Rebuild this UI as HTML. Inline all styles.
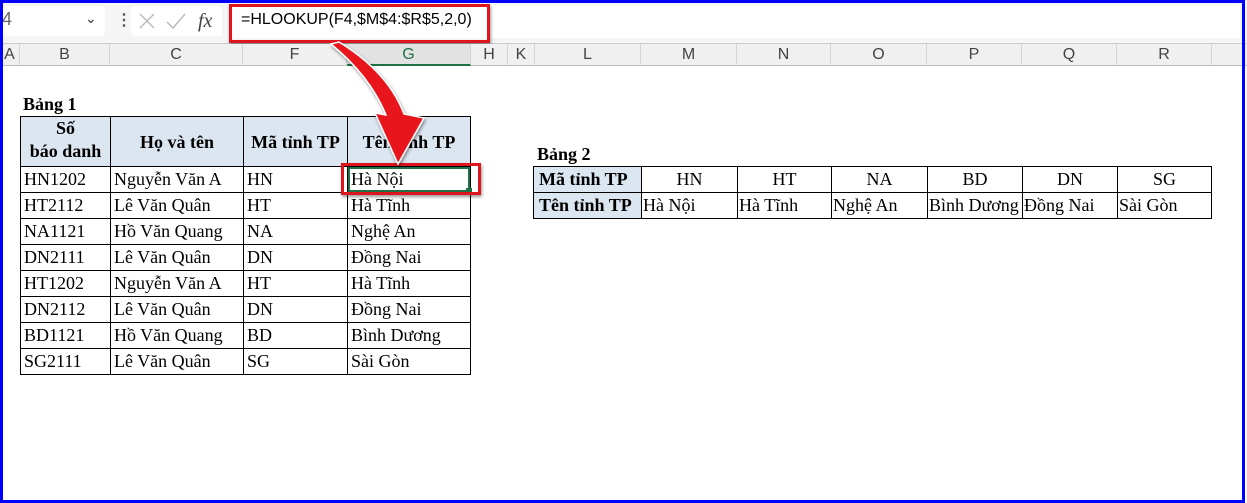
<!DOCTYPE html>
<html><head><meta charset="utf-8"><style>
*{margin:0;padding:0;box-sizing:border-box}
body{width:1247px;height:503px;background:#fff;position:relative;overflow:hidden;font-family:"Liberation Serif",serif}
.a{position:absolute}
.c{position:absolute;border:1px solid #000;font-size:18px;line-height:24px;padding-left:3px;white-space:nowrap;overflow:visible;color:#000}
.h{background:#dce6f1;font-weight:bold;text-align:center;padding:0}
.ctr{text-align:center;padding:0}
.col{position:absolute;top:44px;height:22px;font:16px "Liberation Sans",sans-serif;color:#444;text-align:center;line-height:22px;border-right:1px solid #d4d4d4}
</style></head><body>
<!-- formula bar -->
<div class="a" style="left:0;top:0;width:1247px;height:44px;background:#f5f5f5;border-bottom:1px solid #ccc"></div>
<div class="a" style="left:3px;top:6px;width:102px;height:30px;background:#fff;border-radius:4px"></div>
<div class="a" style="left:2px;top:9px;font:18px 'Liberation Sans',sans-serif;color:#666">4</div>
<div class="a" style="left:85px;top:10px;font:14px 'Liberation Sans',sans-serif;color:#333">&#8964;</div>
<div class="a" style="left:116px;top:10px;font:bold 16px 'Liberation Sans',sans-serif;color:#555">&#8942;</div>
<div class="a" style="left:131px;top:6px;width:91px;height:30px;background:#fff;border-radius:4px"></div>
<svg class="a" style="left:136px;top:10px" width="90" height="22"><path d="M4 4l14 14M18 4L4 18" stroke="#bbb" stroke-width="1.5" fill="none"/><path d="M31 12l6 6 12-14" stroke="#bbb" stroke-width="1.5" fill="none"/><text x="62" y="17" font-family="Liberation Serif" font-style="italic" font-size="20" fill="#444">fx</text></svg>
<div class="a" style="left:230px;top:5px;width:1010px;height:33px;background:#fff"></div>
<div class="a" style="left:229px;top:4px;width:261px;height:39px;border:3px solid #e0141c;box-shadow:1px 2px 3px rgba(0,0,0,.4)"></div>
<div class="a" style="left:241px;top:11px;font:16px 'Liberation Sans',sans-serif;color:#000">=HLOOKUP(F4,$M$4:$R$5,2,0)</div>
<!-- column headers -->
<div class="a" style="left:0;top:44px;width:1247px;height:22px;background:#f0f0f0;border-bottom:1px solid #bbb"></div>
<div class="col" style="left:0;width:20px">A</div>
<div class="col" style="left:20px;width:90px">B</div>
<div class="col" style="left:110px;width:133px">C</div>
<div class="col" style="left:243px;width:104px">F</div>
<div class="col" style="left:347px;width:124px;color:#1e7145;background:#e2e2e2;border-bottom:2px solid #1e7145">G</div>
<div class="col" style="left:471px;width:37px">H</div>
<div class="col" style="left:508px;width:27px">K</div>
<div class="col" style="left:535px;width:106px">L</div>
<div class="col" style="left:641px;width:96px">M</div>
<div class="col" style="left:737px;width:94px">N</div>
<div class="col" style="left:831px;width:96px">O</div>
<div class="col" style="left:927px;width:95px">P</div>
<div class="col" style="left:1022px;width:95px">Q</div>
<div class="col" style="left:1117px;width:95px">R</div>
<!-- table 1 -->
<div class="a" style="left:23px;top:94px;font:bold 18px 'Liberation Serif',serif">Bảng 1</div>
<div class="c h" style="left:20px;top:116px;width:91px;height:51px;line-height:23px">Số<br>báo danh</div>
<div class="c h" style="left:110px;top:116px;width:134px;height:51px;line-height:50px">Họ và tên</div>
<div class="c h" style="left:243px;top:116px;width:105px;height:51px;line-height:50px">Mã tỉnh TP</div>
<div class="c h" style="left:347px;top:116px;width:124px;height:51px;line-height:50px">Tên tỉnh TP</div>
<div class="c" style="left:20px;top:166px;width:91px;height:27px">HN1202</div><div class="c" style="left:110px;top:166px;width:134px;height:27px">Nguyễn Văn A</div><div class="c" style="left:243px;top:166px;width:105px;height:27px">HN</div><div class="c" style="left:347px;top:166px;width:124px;height:27px">Hà Nội</div>
<div class="c" style="left:20px;top:192px;width:91px;height:27px">HT2112</div><div class="c" style="left:110px;top:192px;width:134px;height:27px">Lê Văn Quân</div><div class="c" style="left:243px;top:192px;width:105px;height:27px">HT</div><div class="c" style="left:347px;top:192px;width:124px;height:27px">Hà Tĩnh</div>
<div class="c" style="left:20px;top:218px;width:91px;height:27px">NA1121</div><div class="c" style="left:110px;top:218px;width:134px;height:27px">Hồ Văn Quang</div><div class="c" style="left:243px;top:218px;width:105px;height:27px">NA</div><div class="c" style="left:347px;top:218px;width:124px;height:27px">Nghệ An</div>
<div class="c" style="left:20px;top:244px;width:91px;height:27px">DN2111</div><div class="c" style="left:110px;top:244px;width:134px;height:27px">Lê Văn Quân</div><div class="c" style="left:243px;top:244px;width:105px;height:27px">DN</div><div class="c" style="left:347px;top:244px;width:124px;height:27px">Đồng Nai</div>
<div class="c" style="left:20px;top:270px;width:91px;height:27px">HT1202</div><div class="c" style="left:110px;top:270px;width:134px;height:27px">Nguyễn Văn A</div><div class="c" style="left:243px;top:270px;width:105px;height:27px">HT</div><div class="c" style="left:347px;top:270px;width:124px;height:27px">Hà Tĩnh</div>
<div class="c" style="left:20px;top:296px;width:91px;height:27px">DN2112</div><div class="c" style="left:110px;top:296px;width:134px;height:27px">Lê Văn Quân</div><div class="c" style="left:243px;top:296px;width:105px;height:27px">DN</div><div class="c" style="left:347px;top:296px;width:124px;height:27px">Đồng Nai</div>
<div class="c" style="left:20px;top:322px;width:91px;height:27px">BD1121</div><div class="c" style="left:110px;top:322px;width:134px;height:27px">Hồ Văn Quang</div><div class="c" style="left:243px;top:322px;width:105px;height:27px">BD</div><div class="c" style="left:347px;top:322px;width:124px;height:27px">Bình Dương</div>
<div class="c" style="left:20px;top:348px;width:91px;height:27px">SG2111</div><div class="c" style="left:110px;top:348px;width:134px;height:27px">Lê Văn Quân</div><div class="c" style="left:243px;top:348px;width:105px;height:27px">SG</div><div class="c" style="left:347px;top:348px;width:124px;height:27px">Sài Gòn</div>
<div class="a" style="left:348px;top:167px;width:122px;height:25px;border:2px solid #1e7145"></div>
<div class="a" style="left:466px;top:188px;width:6px;height:6px;background:#1e7145"></div>
<div class="a" style="left:341px;top:163px;width:140px;height:32px;border:3px solid #e0141c;box-shadow:1px 2px 3px rgba(0,0,0,.4)"></div>
<!-- table 2 -->
<div class="a" style="left:537px;top:144px;font:bold 18px 'Liberation Serif',serif">Bảng 2</div>
<div class="c h" style="left:533px;top:166px;width:109px;height:27px;text-align:left;padding-left:5px">Mã tỉnh TP</div>
<div class="c ctr" style="left:641px;top:166px;width:97px;height:27px">HN</div><div class="c ctr" style="left:737px;top:166px;width:95px;height:27px">HT</div><div class="c ctr" style="left:831px;top:166px;width:97px;height:27px">NA</div><div class="c ctr" style="left:927px;top:166px;width:96px;height:27px">BD</div><div class="c ctr" style="left:1022px;top:166px;width:96px;height:27px">DN</div><div class="c ctr" style="left:1117px;top:166px;width:95px;height:27px">SG</div>
<div class="c h" style="left:533px;top:192px;width:109px;height:27px;text-align:left;padding-left:5px">Tên tỉnh TP</div>
<div class="c" style="left:641px;top:192px;width:97px;height:27px;padding-left:1px">Hà Nội</div><div class="c" style="left:737px;top:192px;width:95px;height:27px;padding-left:1px">Hà Tĩnh</div><div class="c" style="left:831px;top:192px;width:97px;height:27px;padding-left:1px">Nghệ An</div><div class="c" style="left:927px;top:192px;width:96px;height:27px;padding-left:1px;overflow:hidden">Bình Dương</div><div class="c" style="left:1022px;top:192px;width:96px;height:27px;padding-left:1px">Đồng Nai</div><div class="c" style="left:1117px;top:192px;width:95px;height:27px;padding-left:1px">Sài Gòn</div>
<!-- arrow -->
<svg class="a" style="left:0;top:0" width="1247" height="503">
<defs><filter id="s"><feDropShadow dx="1" dy="2" stdDeviation="1.5" flood-opacity=".45"/></filter></defs>
<path d="M331 44 L339 42 Q388 72 404 114 L424 118 L398 164 L375 113 L386 115 Q370 76 331 44 Z" fill="#e8141a" stroke="#fff" stroke-width="1.5" filter="url(#s)"/>
</svg>
<!-- blue frame -->
<div class="a" style="left:0;top:0;width:1245px;height:503px;border:3px solid #0000ff"></div>
</body></html>
